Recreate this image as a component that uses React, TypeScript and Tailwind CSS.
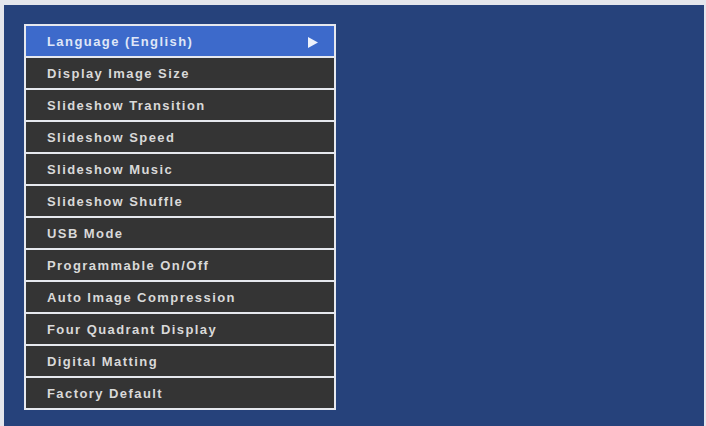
const items = [
  "Language (English)",
  "Display Image Size",
  "Slideshow Transition",
  "Slideshow Speed",
  "Slideshow Music",
  "Slideshow Shuffle",
  "USB Mode",
  "Programmable On/Off",
  "Auto Image Compression",
  "Four Quadrant Display",
  "Digital Matting",
  "Factory Default",
];

export default function App() {
  return (
    <div className="w-[706px] h-[426px] bg-[#e4e6ec] pl-[4px] pt-[5px] pr-[2px] overflow-hidden">
      <div className="h-[421px] bg-[#26427b] pl-[20px] pt-[19px]">
        {/* menu */}
        <div className="w-[312px] border-2 border-[#e6e8ee] bg-[#e6e8ee] flex flex-col gap-[2px]">
          {items.map((label, i) => (
            <div
              key={label}
              className={
                i === 0
                  ? "h-[30px] flex items-center justify-between pl-[21px] pr-[16px] pt-[2px] bg-[#3d6acb] text-[#dfe6f7]"
                  : "h-[30px] flex items-center pl-[21px] pt-[2px] bg-[#343434] text-[#d9d9d9]"
              }
              style={{ fontFamily: '"Liberation Sans", Arial, sans-serif' }}
            >
              <span className="text-[13px] font-bold tracking-[0.11em]">{label}</span>
              {i === 0 && (
                <svg width="10" height="11" viewBox="0 0 10 11">
                  <path d="M0 0 L10 5.5 L0 11 Z" fill="#eef2fb" />
                </svg>
              )}
            </div>
          ))}
        </div>
      </div>
    </div>
  );
}
